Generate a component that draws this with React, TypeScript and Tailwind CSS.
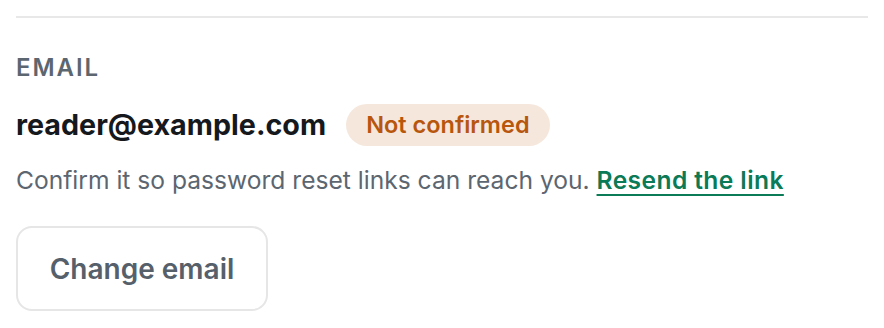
export default function App() {
  return (
    <div className="w-[884px] h-[328px] bg-white px-4 pt-4 font-['Inter',sans-serif]">
      <div className="border-t-2 border-[#e8e8e8]" />
      <div className="pt-[34px]">
        <div className="text-[24px] leading-[32px] font-semibold tracking-[0.08em] text-[#5c6670]">EMAIL</div>
        <div className="mt-[20px] flex items-center gap-5">
          <span className="text-[28.7px] leading-[42px] font-bold text-[#15181c]">reader@example.com</span>
          <span className="h-[42px] rounded-full bg-[#f5e7dc] px-5 flex items-center text-[23.5px] font-semibold text-[#b8560d]">
            Not confirmed
          </span>
        </div>
        <p className="mt-[18px] text-[24.6px] leading-[32px] text-[#5c6670]">
          Confirm it so password reset links can reach you.{" "}
          <a href="#" className="font-semibold tracking-[0.016em] text-[#0b7a56] underline decoration-2 underline-offset-[5px]">
            Resend the link
          </a>
        </p>
        <button className="mt-[30px] h-[85px] w-[252px] rounded-2xl border-2 border-[#e6e6e6] text-[28px] font-semibold text-[#56606b]">
          Change email
        </button>
      </div>
    </div>
  )
}
